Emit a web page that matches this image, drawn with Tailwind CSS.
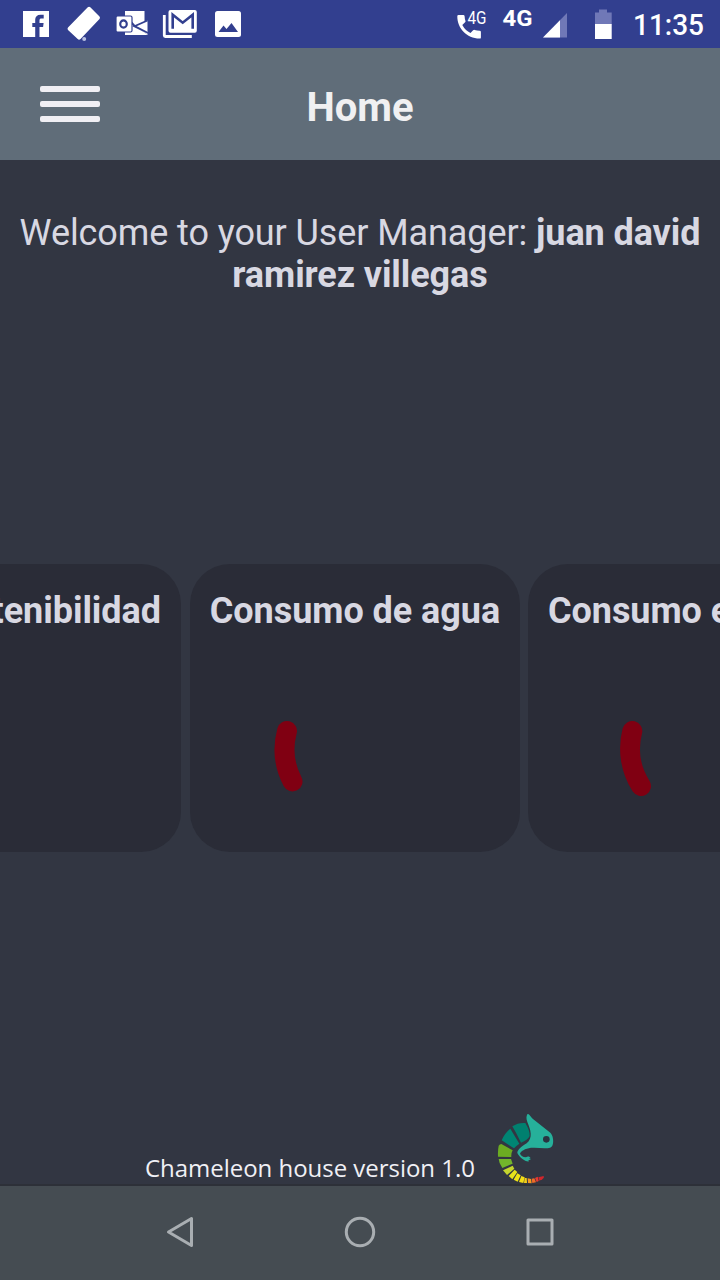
<!DOCTYPE html>
<html lang="es">
<head>
<meta charset="utf-8">
<title>Home</title>
<script src="https://cdn.jsdelivr.net/npm/@tailwindcss/browser@4"></script>
</head>
<body class="w-[720px] h-[1280px] overflow-hidden flex flex-col bg-[#323642] text-[#d8d8e2] font-['Roboto',sans-serif]">

<!-- Status bar -->
<div class="h-12 shrink-0 bg-[#323f8f] flex justify-between text-white">
  <svg class="w-[260px] h-12" viewBox="0 0 260 48" fill="#fff">
    <path d="M23 11h26v26h-9.500v-10h3.600l.5-4h-4.100v-2.600c0-1.400.6-2 2-2h2.200v-3.600h-3.200c-3.500 0-5.300 2-5.300 5v3.200h-2.900v4h2.900V37H23z"/>
    <path d="M90.300 7.300 99.500 16.500Q100.500 17.700 99.500 19L80.500 39Q79 40.300 77.700 39L68 30Q67 28.800 68 27.500L87.500 7.600Q89 6.200 90.300 7.300z"/>
    <circle cx="84.200" cy="39" r="2" fill="#b9c0e2"/>
    <path d="M125 11h19.500v10.500L136 26l11.500 9H125z"/>
    <path d="M134 25.500 147.500 20.500V35z"/>
    <path d="M147.500 20.500 134.500 26.200 148 33M135 26.500 131 22" fill="none" stroke="#323f8f" stroke-width="1.900"/>
    <path d="M117.500 16h13q1.500 0 1.500 1.500v13q0 1.500-1.500 1.500h-13q-1.500 0-1.500-1.500v-13q0-1.500 1.500-1.500z" stroke="#323f8f" stroke-width="1.200"/>
    <ellipse cx="123.500" cy="24" rx="3.300" ry="3.600" fill="none" stroke="#323f8f" stroke-width="2.100"/>
    <rect x="168.500" y="10" width="28.300" height="22.700" rx="2"/>
    <path d="M172.700 28.700v-14l10 8 10-8v14" fill="none" stroke="#323f8f" stroke-width="2.600"/>
    <path d="M164.300 15v20.500q0 1 1 1h26.500" fill="none" stroke="#fff" stroke-width="2.800"/>
    <rect x="215" y="11" width="26" height="26" rx="2.500"/>
    <path d="m218.500 32 5-6.500 3 3.500 5-6 6.500 9z" fill="#323f8f"/>
  </svg>
  <svg class="w-[280px] h-12 font-['Roboto',sans-serif]" viewBox="0 0 280 48" fill="#fff">
    <path d="M18.500 15h4.800q1.200 0 1.300 1.200.1 2.500.9 4.700.2.800-.4 1.400l-2.800 2.600q3 5.600 8.200 8l2.600-2.600q.7-.7 1.600-.4 2.200.7 5 .9 1.200 0 1.200 1.200v5.400q0 1.200-1.200 1.200C26.500 38 17.300 28.500 17.300 16.200q0-1.200 1.200-1.200z"/>
    <text x="27.500" y="24" font-size="18" textLength="19" lengthAdjust="spacingAndGlyphs">4G</text>
    <text x="62.500" y="25.700" font-size="22.500" font-weight="700" textLength="30" lengthAdjust="spacingAndGlyphs">4G</text>
    <path d="M127 13v24.500h-24z" fill="#7078b7"/>
    <path d="M120 20.200v17.300h-17z"/>
    <path d="M155 12.500h4v-3h8v3h4.700v12H155z" fill="#7078b7"/>
    <path d="M155 24h16.700v15H155z"/>
    <text x="193" y="35" font-size="29" font-weight="500" textLength="71" lengthAdjust="spacingAndGlyphs">11:35</text>
  </svg>
</div>

<!-- Header -->
<header class="h-28 shrink-0 bg-[#606d79] grid grid-cols-3 px-10 pt-[38px]">
  <div class="w-[60px] flex flex-col gap-[9.500px]">
    <div class="h-[5.500px] rounded-[2px] bg-[#f0eff4]"></div>
    <div class="h-[5.500px] rounded-[2px] bg-[#f0eff4]"></div>
    <div class="h-[5.500px] rounded-[2px] bg-[#f0eff4]"></div>
  </div>
  <h1 class="text-center text-[40px] leading-[44px] font-bold text-[#f0f0f2]">Home</h1>
</header>

<!-- Content -->
<main class="flex-1 flex flex-col overflow-hidden">
  <p class="pt-[52px] text-center text-[36px] leading-[42px] tracking-[-0.09px] whitespace-nowrap">Welcome to your User Manager: <b>juan david<br>ramirez villegas</b></p>

  <div class="mt-[268px] -ml-[79px] w-[900px] h-72 shrink-0 flex text-[36px] leading-[42px] tracking-[-0.05px] font-bold whitespace-nowrap">
    <section class="w-[260px] shrink-0 mr-[9px] rounded-[40px] bg-[#2a2c37] px-5 pt-[26px] flex justify-end">
      <h2>Sostenibilidad</h2>
    </section>
    <section class="w-[330px] shrink-0 mr-2 rounded-[40px] bg-[#2a2c37] pt-[26px] flex flex-col">
      <h2 class="text-center">Consumo de agua</h2>
      <svg class="w-[330px] h-[220px]" viewBox="0 68 330 220" fill="none">
        <path d="M97 167A70 70 0 0 0 102.500 217.500" stroke="#800012" stroke-width="20" stroke-linecap="round"/>
      </svg>
    </section>
    <section class="w-[370px] shrink-0 rounded-[40px] bg-[#2a2c37] pt-[26px] px-5 flex flex-col">
      <h2>Consumo energético</h2>
      <svg class="w-[330px] h-[220px]" viewBox="20 68 330 220" fill="none">
        <path d="M104.300 167A70 70 0 0 0 113 222" stroke="#800012" stroke-width="20" stroke-linecap="round"/>
      </svg>
    </section>
  </div>

  <footer class="mt-auto flex items-end pl-[145px] text-[#f0f0f5]">
    <span class="w-[335px] font-['Open_Sans',sans-serif] text-[24px] leading-[32px] tracking-[-0.03px] whitespace-nowrap">Chameleon house version 1.0</span>
    <!-- Chameleon logo -->
    <svg class="w-[90px] h-[84px]" viewBox="0 0 270 252">
      <path d="M142 43C146 38 151 49 158 56L211 98C218 104 222 122 218 134C216 143 207 145 194 145L163 143C144 142 126 149 120 160C121 166 128 172 138 172C144 168 149 170 152 175L147 176L153 180L145 180L147 184C136 186 118 172 112 159C112 151 123 140 140 130C160 114 152 90 142 66C138 56 139 48 142 43Z" fill="#26b09a"/>
      <circle cx="199" cy="118" r="10" fill="#293340"/>
      <path d="M97 79Q115 67 136 69Q150 92 149 108Q143 120 123 128Q111 103 97 79Z" fill="#00806f"/>
      <path d="M65 121Q74 99 91 86L118 131Q108 138 102 145Z" fill="#008573"/>
      <path d="M56 137Q59 132 64 132L98 151Q93 160 94 171L54 170Q53 151 56 137Z" fill="#6cac22"/>
      <path d="M56 177L93 177L98 191L67 204Q57 190 56 177Z" fill="#72b52b"/>
      <path d="M69 211L98 197L103 206L81 225Z" fill="#c4d52e"/>
      <path d="M86 228L104 209L112 216L97 238Z" fill="#e6e21c"/>
      <path d="M101 239L112 220L122 226L113 245Z" fill="#eee314"/>
      <path d="M117 246L124 228L134 232L130 249Z" fill="#f1dc16"/>
      <path d="M134 234L140 234L141 249L132 249Z" fill="#f2cd17"/>
      <path d="M143 235L153 237L155 250L144 249Z" fill="#f39b20"/>
      <path d="M155 236L163 235L168 247L157 249Z" fill="#ef6a27"/>
      <path d="M165 234L173 230L176 243L170 246Z" fill="#e83930"/>
      <path d="M175 232L191 228Q194 234 187 238L178 242Z" fill="#cf262c"/>
    </svg>
  </footer>
</main>

<!-- Navigation bar -->
<nav class="h-[96px] shrink-0 border-t-2 border-[#2d3038] bg-[#454c52] flex justify-center">
  <svg class="w-[420px] h-[90px]" viewBox="150 1186 420 90" fill="none" stroke="#a9aeb2" stroke-width="3" stroke-linejoin="round">
    <path d="M191.500 1218.500v27L168.500 1232z"/>
    <circle cx="360" cy="1232" r="13.700"/>
    <rect x="528" y="1220" width="24" height="24"/>
  </svg>
</nav>
</body>
</html>
